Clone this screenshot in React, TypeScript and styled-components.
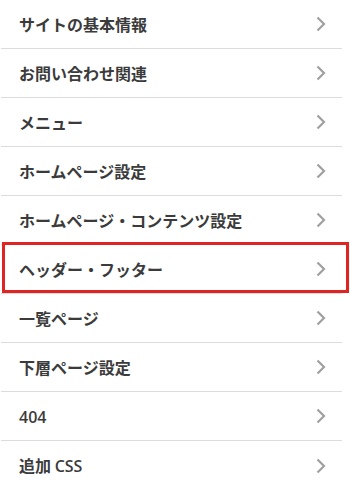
import React from "react";
import styled, { createGlobalStyle } from "styled-components";

const GlobalStyle = createGlobalStyle`
  html, body {
    margin: 0;
    padding: 0;
    background: #ffffff;
  }
  body {
    font-family: "Noto Sans CJK JP", "Noto Sans", sans-serif;
  }
`;

const Menu = styled.ul`
  list-style: none;
  margin: 0;
  padding: 0 0 0 1px;
  width: 341px;
`;

const Row = styled.li<{ $active?: boolean; $last?: boolean }>`
  position: relative;
  display: flex;
  align-items: center;
  justify-content: space-between;
  box-sizing: border-box;
  height: 49px;
  padding: 0 16px 0 18px;
  border-bottom: ${(p) => (p.$last ? "none" : "1px solid #dcdcdc")};
  cursor: pointer;

  ${(p) =>
    p.$active &&
    `
    &::after {
      content: "";
      position: absolute;
      top: -3px;
      left: 1px;
      right: -7px;
      bottom: 0;
      border: 3px solid #e02424;
      pointer-events: none;
    }
  `}
`;

const Label = styled.span`
  color: #3b3b3b;
  font-family: "Noto Sans CJK JP", sans-serif;
  font-size: 16px;
  font-weight: 700;
  line-height: 1;
`;

const Latin = styled.span`
  font-family: "Open Sans", "Noto Sans", sans-serif;
  font-weight: 600;
  font-size: 16px;
`;

const Chevron = styled.svg`
  width: 10px;
  height: 16px;
  flex: none;
`;

const items = [
  "サイトの基本情報",
  "お問い合わせ関連",
  "メニュー",
  "ホームページ設定",
  "ホームページ・コンテンツ設定",
  "ヘッダー・フッター",
  "一覧ページ",
  "下層ページ設定",
  "404",
  "追加 CSS",
];

const renderLabel = (text: string) =>
  text.split(/([A-Za-z0-9]+)/).map((part, i) =>
    /^[A-Za-z0-9]+$/.test(part) ? <Latin key={i}>{part}</Latin> : part
  );

export default function App() {
  return (
    <>
      <GlobalStyle />
      <Menu>
        {items.map((item, i) => (
          <Row
            key={item}
            $active={item === "ヘッダー・フッター"}
            $last={i === items.length - 1}
          >
            <Label>{renderLabel(item)}</Label>
            <Chevron viewBox="0 0 10 16">
              <polyline
                points="1.5,1.5 8,8 1.5,14.5"
                fill="none"
                stroke="#a0a0a0"
                strokeWidth="2.2"
              />
            </Chevron>
          </Row>
        ))}
      </Menu>
    </>
  );
}
